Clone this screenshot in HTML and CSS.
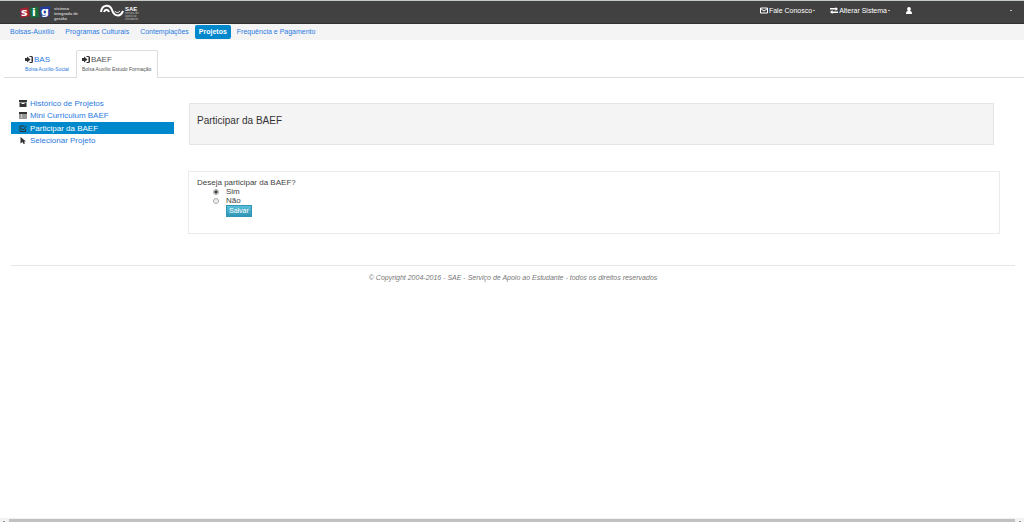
FILE: index.html
```html
<!DOCTYPE html>
<html lang="pt-BR">
<head>
<meta charset="utf-8">
<title>SIG - Participar da BAEF</title>
<link rel="stylesheet" href="styles.css">
</head>
<body>
<svg class="defs" aria-hidden="true">
  <symbol id="sign-in" viewBox="0 0 16 14"><path d="M0 4h4V1l7 6-7 6v-3H0zM9 0h4a3 3 0 0 1 3 3v8a3 3 0 0 1-3 3H9v-2h4V2H9z"/></symbol>
</svg>
<header class="topbar">
  <div class="brand">
    <svg class="sig-mark" viewBox="0 0 30 12" role="img" aria-label="sig">
      <path fill="#a82332" d="M0 3l8-2 2 9-9 2z"/>
      <path fill="#14713c" d="M10 2l8-1 1 10-8 1z"/>
      <path fill="#243c9c" d="M20 1l10-1 0 9-4 3-5-1z"/>
      <text class="sig-letter" x="1" y="10">s</text>
      <text class="sig-letter" x="12" y="10">i</text>
      <text class="sig-letter" x="21" y="9">g</text>
    </svg>
    <div class="brand-text">sistema<br>integrado de<br>gestão</div>
  </div>
  <div class="sae">
    <svg class="sae-mark" viewBox="0 0 25 13" aria-hidden="true"><g fill="none" stroke="#fff"><path stroke-width="2" d="M1 8C2 0 10 0 12 6s8 8 11 1"/><path stroke-width="2" d="M4 8c1-3 4-3 5 0"/><path d="M15 7c1 2 3 2 5 0"/></g></svg>
    <div class="sae-text"><strong>SAE</strong><span>serviço de<br>apoio ao<br>estudante</span></div>
  </div>
  <nav class="user-menu" aria-label="Usuário">
    <a class="contact" href="#"><svg class="icon" viewBox="0 0 16 14"><path fill="none" stroke="currentColor" stroke-width="2" d="M1 2h14v10H1zM1 3l7 5 7-5"/></svg>Fale Conosco<i class="caret"></i></a>
    <a class="switch" href="#"><svg class="icon" viewBox="0 0 16 14"><path d="M0 2h11V0l5 4-5 4V5H0zM16 12H5v2l-5-4 5-4v3h11z"/></svg>Alterar Sistema<i class="caret"></i></a>
    <a class="user" href="#" aria-label="Conta"><svg class="icon" viewBox="0 0 16 14"><path d="M8 0c5 0 4 6 2 8 3 0 4 2 4 6H2c0-4 1-6 4-6C4 6 3 0 8 0z"/></svg></a>
    <a class="more" href="#" aria-label="Mais"><i class="caret"></i></a>
  </nav>
</header>
<nav class="main-nav" aria-label="Principal">
  <a href="#">Bolsas-Auxílio</a>
  <a href="#">Programas Culturais</a>
  <a href="#">Contemplações</a>
  <a class="active" href="#">Projetos</a>
  <a href="#">Frequência e Pagamento</a>
</nav>
<nav class="tabs" aria-label="Bolsas">
  <a class="tab" href="#"><span class="tab-title"><svg class="icon dark"><use href="#sign-in"/></svg>BAS</span><small>Bolsa Auxílio-Social</small></a>
  <a class="tab current" href="#"><span class="tab-title"><svg class="icon dark"><use href="#sign-in"/></svg>BAEF</span><small>Bolsa Auxílio Estudo Formação</small></a>
</nav>
<div class="layout">
  <nav class="side" aria-label="Projetos">
    <a href="#"><svg class="icon dark" viewBox="0 0 16 14"><path d="M0 0h16v4H0zM1 5h14v9H1zM5 6v2h6V6z" fill-rule="evenodd"/></svg>Histórico de Projetos</a>
    <a href="#"><svg class="icon dark" viewBox="0 0 16 14"><path fill-rule="evenodd" d="M0 0h16v13H0zM1 4v8h14V4z"/><path d="M2 5h3v2H2zM6 5h8v2H6zM2 8h3v1H2zM6 8h8v1H6zM2 10h3v1H2zM6 10h8v1H6z"/></svg>Mini Curriculum BAEF</a>
    <a class="selected" href="#"><svg class="icon dark" viewBox="0 0 16 14"><path fill="none" stroke="currentColor" stroke-width="2" d="M13 8v5H2V2h9M4 6l4 4 7-8"/></svg>Participar da BAEF</a>
    <a href="#"><svg class="icon dark" viewBox="0 0 16 14"><path d="M3 0l11 9h-4l2 4-3 1-2-4-4 3z"/></svg>Selecionar Projeto</a>
  </nav>
  <main class="content">
    <h1 class="heading">Participar da BAEF</h1>
    <form class="panel">
      <fieldset>
        <legend>Deseja participar da BAEF?</legend>
        <label><input type="radio" name="participar" checked>Sim</label>
        <label><input type="radio" name="participar">Não</label>
      </fieldset>
      <button type="button">Salvar</button>
    </form>
  </main>
</div>
<footer class="footer">© Copyright 2004-2016 - SAE - Serviço de Apoio ao Estudante - todos os direitos reservados</footer>
<div class="scrollbar" aria-hidden="true"><i class="arrow"></i><i class="thumb"></i><i class="arrow"></i></div>
</body>
</html>
```
FILE: styles.css
```css
* { box-sizing: border-box; }
body {
  margin: 0;
  min-height: 100vh;
  display: flex;
  flex-direction: column;
  background: #fff;
  color: #444;
  font: 8px/9px "Liberation Sans", Arial, sans-serif;
}
a { color: #2a7ae2; text-decoration: none; }
.defs { position: absolute; width: 0; height: 0; }
.icon { width: 8px; height: 7px; flex: none; fill: currentColor; }
.dark { color: #333; }

.topbar {
  display: flex;
  height: 24px;
  padding-left: 20px;
  background: #414141;
  border-top: 1px solid #c4cac7;
  border-bottom: 1px solid #303030;
  color: #fff;
}
.brand { display: flex; gap: 4px; width: 80px; padding-top: 5px; }
.sig-mark { width: 30px; height: 12px; }
.sig-letter { font: bold 11px "DejaVu Sans", sans-serif; fill: #fff; }
.brand-text { font-size: 4px; line-height: 5px; font-weight: bold; color: #ccc; white-space: nowrap; }
.sae { display: flex; padding-top: 3px; }
.sae-mark { width: 25px; height: 13px; }
.sae-text { padding-top: 3px; font-size: 3px; line-height: 3px; color: #bbb; }
.sae-text strong { display: block; font-size: 6px; line-height: 5px; color: #fff; }
.sae-text span { display: block; }
.user-menu { display: flex; align-items: flex-start; margin-left: auto; padding: 5px 12px 0 0; }
.user-menu a { display: flex; align-items: center; gap: 1px; height: 9px; color: #fff; font-size: 7px; white-space: nowrap; }
.contact { margin-right: 15px; }
.switch { margin-right: 15px; }
.user { margin-right: 97px; }
.caret { width: 2px; height: 1px; background: #bbb; }

.main-nav { display: flex; align-items: center; gap: 1px; height: 16px; padding-left: 5px; background: #f4f4f4; }
.main-nav a { padding: 0 5px; border-radius: 2px; font-size: 7px; line-height: 14px; white-space: nowrap; }
.main-nav .active { padding: 0 4px; background: #0088cc; color: #fff; font-weight: bold; }

.tabs { display: flex; margin: 10px 0 0 4px; padding-left: 15px; border-bottom: 1px solid #ddd; }
.tab { margin-bottom: -1px; padding: 4px 6px 4px 5px; border: 1px solid transparent; border-bottom: 0; border-radius: 2px 2px 0 0; font-size: 8px; }
.tab-title { display: flex; align-items: center; gap: 1px; margin-bottom: 1px; }
.tab small { display: block; font-size: 5px; line-height: 9px; white-space: nowrap; }
.tabs .current { background: #fff; border-color: #ddd; color: #555; }

.layout { display: flex; gap: 14px; padding: 19px 24px 0 11px; }
.side { flex: 0 0 163px; }
.side a { display: flex; align-items: center; gap: 3px; height: 12px; padding-left: 8px; }
.side .selected { margin-top: 1px; background: #0088cc; color: #fff; }
.content { flex: 1; padding-top: 6px; }
.heading {
  margin: 0 6px 26px 1px;
  padding: 10px 7px 17px;
  background: #f4f4f4;
  border: 1px solid #e4e4e4;
  color: #333;
  font-size: 10px;
  line-height: 13px;
  font-weight: normal;
}
.panel { padding: 6px 8px 16px; border: 1px solid #ebebeb; }
.panel fieldset { margin: 0; padding: 0; border: 0; }
.panel legend { padding: 0; }
.panel label { display: flex; align-items: center; gap: 7px; padding-left: 16px; }
.panel input { appearance: none; width: 6px; height: 6px; margin: 0; border: 1px solid #aaa; border-radius: 50%; background: #eee; }
.panel input:checked { background: radial-gradient(#333 1px, #ddd 2px); }
.panel button {
  display: block;
  margin-left: 29px;
  padding: 0 2px;
  border: 1px solid #2f96b4;
  background: linear-gradient(#5bbfdc, #2f96b4);
  color: #fff;
  font: 7px/10px "Liberation Sans", Arial, sans-serif;
}

.footer {
  margin: 31px 9px 0 11px;
  padding-top: 7px;
  border-top: 1px solid #e5e5e5;
  color: #777;
  font-size: 7px;
  font-style: italic;
  text-align: center;
}
.scrollbar { display: flex; gap: 1px; height: 4px; margin-top: auto; background: #f1f1f1; }
.thumb { flex: 1; margin-top: 1px; background: #c1c1c1; }
.arrow { width: 8px; display: flex; align-items: flex-end; justify-content: center; }
.arrow::after { content: ""; width: 2px; height: 1px; background: #999; }
```
